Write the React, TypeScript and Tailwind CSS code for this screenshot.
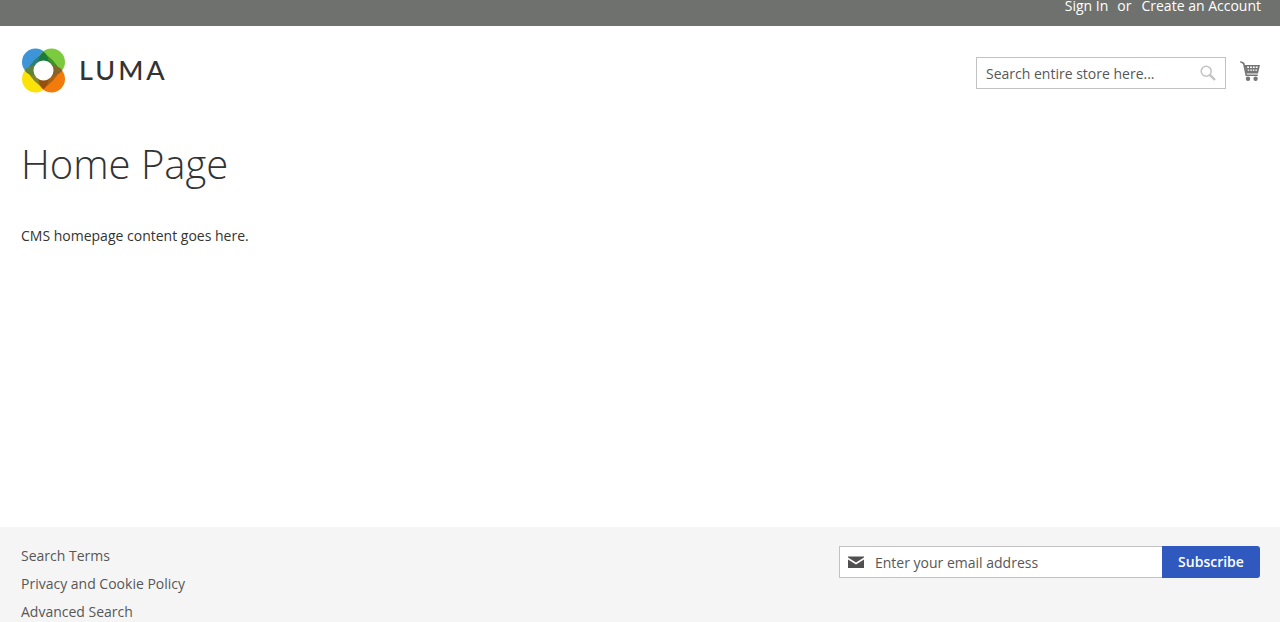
function Logo() {
  return (
    <div className="flex items-center gap-[13px]">
      <svg width="45" height="45" viewBox="0 0 45 45" className="shrink-0">
        <circle cx="14.5" cy="14" r="13.5" fill="#3d94d8" />
        <circle cx="30.5" cy="14" r="13.5" fill="#7ccb3f" />
        <circle cx="14.5" cy="31" r="13.5" fill="#fbe30a" />
        <circle cx="30.5" cy="31" r="13.5" fill="#f37b0c" />
        {/* darker ring where the petals overlap */}
        <path d="M22.5 22.5 L22.5 5 Q12 11 6 22.5 Z" fill="#2b7f78" />
        <path d="M22.5 22.5 L22.5 5 Q33 11 39 22.5 Z" fill="#3f8f2c" />
        <path d="M22.5 22.5 L6 22.5 Q12 34 22.5 40 Z" fill="#87862c" />
        <path d="M22.5 22.5 L39 22.5 Q33 34 22.5 40 Z" fill="#a9600f" />
        <path d="M22.5 3.5 A13.5 13.5 0 0 1 22.5 24.5 A13.5 13.5 0 0 1 22.5 3.5Z" fill="#1c7a3c" />
        <path d="M3.5 22.5 A13.5 13.5 0 0 1 24.5 22.5 A13.5 13.5 0 0 1 3.5 22.5Z" fill="#5e8238" />
        <path d="M20.5 22.5 A13.5 13.5 0 0 1 41.5 22.5 A13.5 13.5 0 0 1 20.5 22.5Z" fill="#85642a" />
        <path d="M22.5 20.5 A13.5 13.5 0 0 1 22.5 41.5 A13.5 13.5 0 0 1 22.5 20.5Z" fill="#95500f" />
        <circle cx="22.5" cy="22.5" r="10" fill="#fff" />
      </svg>
      <span className="font-['Lato',sans-serif] text-[27px] leading-none font-medium tracking-[3px] -mt-[2px] text-[#333333]">
        LUMA
      </span>
    </div>
  );
}

function SearchIcon() {
  return (
    <svg width="16" height="16" viewBox="0 0 16 16" fill="none" stroke="#c2c2c2">
      <circle cx="6.2" cy="6.2" r="5" strokeWidth="1.5" />
      <path d="M9.8 9.8 L15 15" strokeWidth="2.4" />
    </svg>
  );
}

function CartIcon() {
  return (
    <svg width="20" height="20" viewBox="0 0 20 20" fill="#757575">
      <path d="M0 1.2 L0.6 0 L4.4 1.8 L7 13.4 H17.8 V15 H5.6 L3 3 Z" />
      <path d="M4.6 4 H20 L18 12.4 H6.4 Z M7 5.6 L7.3 7 H9 L8.9 5.6 Z M10 5.6 L10.1 7 H11.9 L11.9 5.6 Z M12.9 5.6 L12.8 7 H14.6 L14.8 5.6 Z M15.8 5.6 L15.6 7 H17.4 L17.8 5.6 Z M7.6 8.4 L7.9 9.8 H9.2 L9.1 8.4 Z M10.2 8.4 L10.3 9.8 H11.9 L11.9 8.4 Z M12.8 8.4 L12.7 9.8 H14.3 L14.5 8.4 Z M15.5 8.4 L15.3 9.8 H16.9 L17.2 8.4 Z" fillRule="evenodd" />
      <circle cx="8" cy="17.8" r="2.2" />
      <circle cx="15.6" cy="17.8" r="2.2" />
    </svg>
  );
}

function MailIcon() {
  return (
    <svg width="16" height="12" viewBox="0 0 16 12" fill="#514f4f">
      <path d="M0 0.5 H16 V1.6 L8 6.6 L0 1.6 Z" />
      <path d="M0 3.4 L8 8.4 L16 3.4 V12 H0 Z" />
    </svg>
  );
}

export default function App() {
  return (
    <div className="h-screen overflow-hidden flex flex-col bg-white text-[14px] leading-[20px] text-[#333333] font-['Open_Sans',sans-serif]">
      {/* Top links */}
      <div className="h-[26px] shrink-0 overflow-hidden bg-[#6e716e] text-white flex justify-end pr-[19px]">
        <ul className="flex gap-[9px] -mt-[4px]">
          <li>Sign In</li>
          <li className="mr-[1px]">or</li>
          <li>Create an Account</li>
        </ul>
      </div>

      {/* Header */}
      <header className="shrink-0 flex justify-between pl-[21px] pr-[20px] pt-[22px]">
        <Logo />
        <div className="flex items-start gap-[14px] pt-[9px]">
          <div className="w-[250px] h-[32px] border border-[#c2c2c2] bg-white flex items-center justify-between pl-[9px] pr-[9px]">
            <span className="text-[#575757] mt-[1px]">Search entire store here...</span>
            <SearchIcon />
          </div>
          <div className="pt-[4px]">
            <CartIcon />
          </div>
        </div>
      </header>

      {/* Main */}
      <main className="flex-1 pl-[21px] pt-[46px]">
        <h1 className="text-[40px] leading-[50px] font-light">Home Page</h1>
        <p className="mt-[37px]">CMS homepage content goes here.</p>
      </main>

      {/* Footer */}
      <footer className="h-[95px] shrink-0 bg-[#f5f5f5] flex justify-between pl-[21px] pr-[20px] pt-[19px]">
        <ul className="flex flex-col gap-[8px] text-[#575757]">
          <li>Search Terms</li>
          <li>Privacy and Cookie Policy</li>
          <li>Advanced Search</li>
        </ul>
        <div className="flex h-[32px]">
          <div className="w-[323px] border border-[#c2c2c2] border-r-0 bg-white flex items-center gap-[11px] pl-[8px]">
            <MailIcon />
            <span className="text-[#575757] mt-[1px]">Enter your email address</span>
          </div>
          <button className="w-[98px] bg-[#3059c0] text-white font-semibold rounded-r-[3px]">Subscribe</button>
        </div>
      </footer>
    </div>
  );
}
